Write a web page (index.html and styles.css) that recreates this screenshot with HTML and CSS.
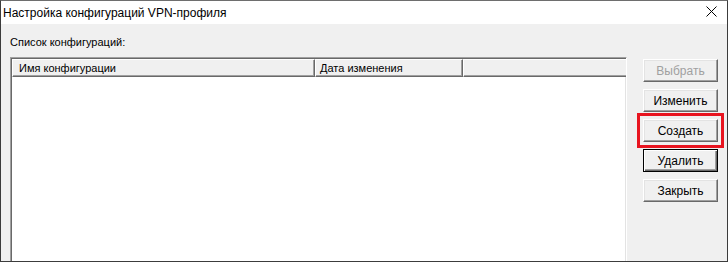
FILE: index.html
```html
<!DOCTYPE html>
<html lang="ru">
<head>
    <meta charset="UTF-8">
    <title>Настройка конфигураций VPN-профиля</title>
    <link rel="stylesheet" href="styles.css">
</head>
<body>
    <div class="window">
        <div class="titlebar">
            <span class="title">Настройка конфигураций VPN-профиля</span>
            <span class="close">
                <svg width="11" height="11" viewBox="0 0 11 11">
                    <path d="M0.5 0.5 L10.5 10.5 M10.5 0.5 L0.5 10.5" stroke="#000" stroke-width="1" fill="none"/>
                </svg>
            </span>
        </div>

        <div class="content">
            <div class="left">
                <div class="label">Список конфигураций:</div>
                <div class="list">
                    <div class="list-header">
                        <div class="col col-name">Имя конфигурации</div>
                        <div class="col col-date">Дата изменения</div>
                        <div class="col col-rest"></div>
                    </div>
                </div>
            </div>

            <div class="buttons">
                <button class="btn" disabled>Выбрать</button>
                <button class="btn">Изменить</button>
                <button class="btn btn-marked">Создать</button>
                <button class="btn btn-default">Удалить</button>
                <button class="btn">Закрыть</button>
            </div>
        </div>
    </div>
</body>
</html>
```

FILE: styles.css
```css
body {
    margin: 0;
    padding: 0;
    font-family: "Liberation Sans", Arial, sans-serif;
    font-size: 11px;
    background: #f0f0f0;
}

.window {
    width: 728px;
    height: 262px;
    box-sizing: border-box;
    border: 1px solid #3c3c3c;
    border-top-color: #6e6e6e;
    background: #f0f0f0;
    overflow: hidden;
}

/* Title bar */
.titlebar {
    height: 23px;
    background: #fff;
    display: flex;
    align-items: center;
    justify-content: space-between;
    padding-left: 2px;
}

.title {
    font-size: 12px;
    color: #000;
}

.close {
    display: flex;
    align-items: center;
    justify-content: center;
    width: 32px;
    height: 23px;
    margin-right: 0;
    padding-bottom: 2px;
    box-sizing: border-box;
}

/* Main area */
.content {
    display: flex;
}

.left {
    padding-left: 9px;
}

.label {
    padding-top: 11px;
    line-height: 15px;
    height: 15px;
    margin-bottom: 7px;
}

.list {
    width: 617px;
    height: 300px;
    box-sizing: border-box;
    background: #fff;
    border: 1px solid;
    border-color: #a0a0a0 #fff #fff #a0a0a0;
    box-shadow: inset 1px 1px 0 #696969, inset -1px -1px 0 #e3e3e3;
    padding: 1px 0 0 1px;
}

.list-header {
    display: flex;
    height: 18px;
}

.col {
    box-sizing: border-box;
    height: 18px;
    line-height: 16px;
    padding-left: 6px;
    background: #f0f0f0;
    border-left: 1px solid #fff;
    border-top: 1px solid #fff;
    border-right: 1px solid #696969;
    border-bottom: 1px solid #696969;
    box-shadow: inset -1px -1px 0 #a0a0a0;
    white-space: nowrap;
}

.col-name { width: 303px; }
.col-date { width: 148px; padding-left: 4px; }
.col-rest { flex: 1; border-right: none; box-shadow: inset 0 -1px 0 #a0a0a0; }

/* Buttons */
.buttons {
    display: flex;
    flex-direction: column;
    gap: 7px;
    padding-top: 35px;
    margin-left: 16px;
}

.btn {
    width: 75px;
    height: 23px;
    box-sizing: border-box;
    font-family: "Liberation Sans", Arial, sans-serif;
    font-size: 12px;
    color: #000;
    background: #f0f0f0;
    border: 1px solid;
    border-color: #fff #696969 #696969 #fff;
    box-shadow: inset -1px -1px 0 #a0a0a0, inset 1px 1px 0 #e3e3e3;
    padding: 0;
}

.btn:disabled {
    color: #a0a0a0;
}

.btn-default {
    border-color: #000;
    box-shadow: inset 1px 1px 0 #fff, inset -1px -1px 0 #696969, inset -2px -2px 0 #a0a0a0;
}

.btn-marked {
    outline: 3px solid #e8141f;
    outline-offset: 3px;
}
```
